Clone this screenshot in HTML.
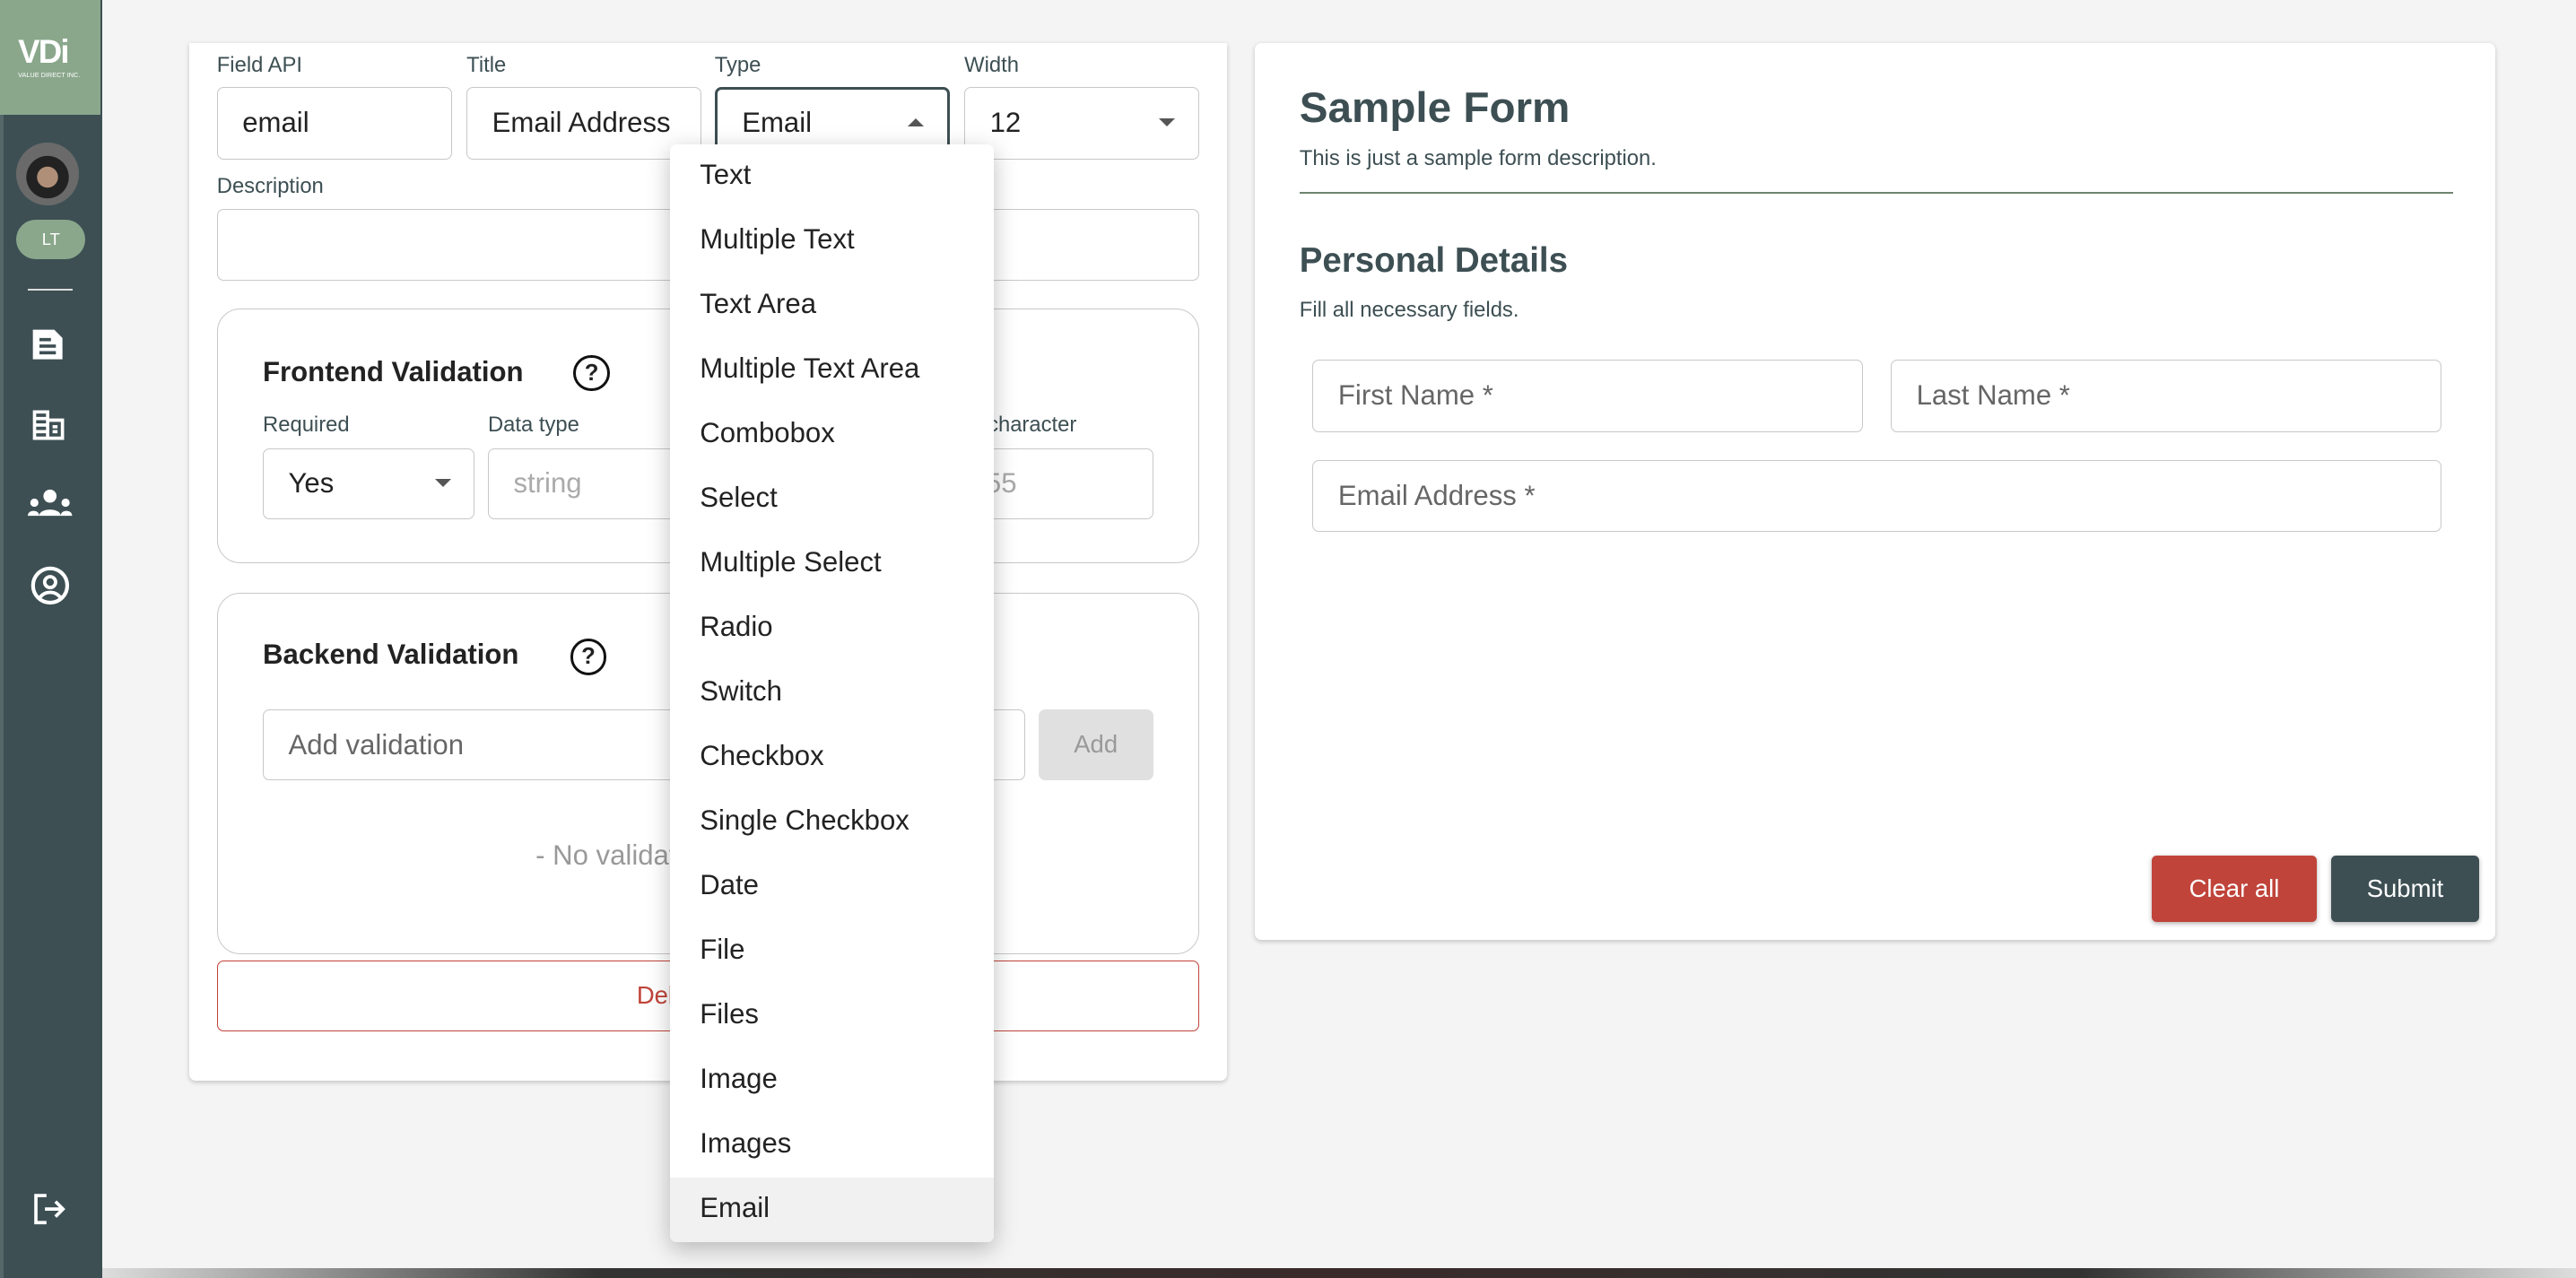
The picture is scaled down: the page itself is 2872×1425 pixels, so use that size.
<!DOCTYPE html>
<html><head><meta charset="utf-8"><style>
html,body{margin:0;padding:0;width:2872px;height:1424px;overflow:hidden;background:#f4f4f4}
#w{position:absolute;left:0;top:0;width:1568px;height:778px;zoom:1.8316;font-family:"Liberation Sans",sans-serif;color:#222}
.a{position:absolute}
.lbl{position:absolute;font-size:13px;color:#3d4f53}
.in{position:absolute;border:1px solid #c8c8c8;border-radius:4px;background:#fff;box-sizing:border-box;font-size:17px;padding-left:15px;display:flex;align-items:center}
.car{position:absolute;right:14px;top:50%;margin-top:-3px;width:0;height:0;border-left:5px solid transparent;border-right:5px solid transparent;border-top:5px solid #555}
.box{position:absolute;border:1px solid #c8c8c8;border-radius:14px;box-sizing:border-box}
.h{position:absolute;font-weight:bold;font-size:17px;color:#222}
.q{position:absolute;width:19px;height:19px;border:2px solid #111;border-radius:50%;font-size:14px;font-weight:bold;text-align:center;line-height:19px}
.dd div{height:39.3px;line-height:37px;padding-left:18px;font-size:17px;color:#222}
</style></head><body><div id="w">
<div class="a" style="left:0;top:0;width:62px;height:778px;background:#3d4f53"></div>
<div class="a" style="left:0;top:0;width:2px;height:778px;background:#56676a"></div>
<div class="a" style="left:0;top:0;width:61px;height:70px;background:#8aa78c"></div>
<div class="a" style="left:11px;top:20px;color:#fff;font-weight:bold;font-size:20px;letter-spacing:-1px">VDi</div>
<div class="a" style="left:11px;top:43px;color:#fff;font-size:4px">VALUE DIRECT INC.</div>
<div class="a" style="left:10px;top:87px;width:38px;height:38px;border-radius:50%;background:radial-gradient(circle at 50% 55%,#b08f78 0 22%,#222 23% 45%,#6a6a6a 46%)"></div>
<div class="a" style="left:10px;top:134px;width:42px;height:24px;border-radius:12px;background:#8aa78c;color:#fff;font-size:10px;text-align:center;line-height:24px">LT</div>
<div class="a" style="left:17px;top:176px;width:27px;height:1px;background:#ddd"></div>
<svg class="a" style="left:18px;top:199px" width="24" height="24" viewBox="0 0 24 24"><path fill="#fff" d="M2 2h13l5 5v13H2z"/><path stroke="#3d4f53" stroke-width="2" d="M6 8h7M6 12h10M6 16h10"/></svg>
<svg class="a" style="left:18px;top:247px" width="24" height="24" viewBox="0 0 24 24"><path fill="none" stroke="#fff" stroke-width="2" d="M3 4h8v16H3zM11 9h9v11h-9M3 8h8M3 12h8M3 16h8M14 13h3M14 16h3"/></svg>
<svg class="a" style="left:17px;top:297px" width="27" height="20" viewBox="0 0 27 20"><circle cx="13.5" cy="5" r="4" fill="#fff"/><path d="M7 17c0-5 13-5 13 0z" fill="#fff"/><circle cx="4" cy="9" r="2.5" fill="#fff"/><circle cx="23" cy="9" r="2.5" fill="#fff"/><path d="M0 17c0-4 7-4 7 0zM20 17c0-4 7-4 7 0z" fill="#fff"/></svg>
<svg class="a" style="left:18px;top:344px" width="25" height="25" viewBox="0 0 24 24"><circle cx="12" cy="12" r="10" fill="none" stroke="#fff" stroke-width="2.2"/><circle cx="12" cy="10" r="3.2" fill="none" stroke="#fff" stroke-width="2"/><path d="M6 19c3-4 9-4 12 0" fill="none" stroke="#fff" stroke-width="2"/></svg>
<svg class="a" style="left:19px;top:725px" width="22" height="22" viewBox="0 0 24 24"><path d="M10 3H3v18h7M9 12h12M16 7l5 5-5 5" fill="none" stroke="#fff" stroke-width="2.2"/></svg>
<div class="a" style="left:62px;top:772px;width:1506px;height:6px;background:linear-gradient(90deg,#ddd,#333 20%,#3a2a2a 50%,#333 80%,#ddd)"></div>
<div class="a" style="left:115px;top:26px;width:632px;height:632px;background:#fff;border-radius:0 0 4px 4px;box-shadow:0 1px 3px rgba(0,0,0,.2)"></div>
<div class="lbl" style="left:132px;top:32px">Field API</div>
<div class="lbl" style="left:284px;top:32px">Title</div>
<div class="lbl" style="left:435px;top:32px">Type</div>
<div class="lbl" style="left:587px;top:32px">Width</div>
<div class="in" style="left:132px;top:53px;width:143px;height:44px">email</div>
<div class="in" style="left:284px;top:53px;width:143px;height:44px;overflow:hidden;white-space:nowrap">Email Address</div>
<div class="in" style="left:435px;top:53px;width:143px;height:44px;border:2px solid #3d4f53">Email<div class="car" style="border-top:0;border-bottom:5px solid #555"></div></div>
<div class="in" style="left:587px;top:53px;width:143px;height:44px">12<div class="car"></div></div>
<div class="lbl" style="left:132px;top:106px">Description</div>
<div class="in" style="left:132px;top:127px;width:598px;height:44px"></div>
<div class="box" style="left:132px;top:188px;width:598px;height:155px"></div>
<div class="h" style="left:160px;top:217px">Frontend Validation</div>
<div class="q" style="left:349px;top:216px">?</div>
<div class="lbl" style="left:160px;top:251px">Required</div>
<div class="lbl" style="left:297px;top:251px">Data type</div>
<div class="lbl" style="left:573px;top:251px">Max character</div>
<div class="in" style="left:160px;top:273px;width:129px;height:43px">Yes<div class="car"></div></div>
<div class="in" style="left:297px;top:273px;width:250px;height:43px;color:#aaa">string</div>
<div class="in" style="left:556px;top:273px;width:146px;height:43px;color:#aaa;padding-left:34px">255</div>
<div class="box" style="left:132px;top:361px;width:598px;height:220px"></div>
<div class="h" style="left:160px;top:389px">Backend Validation</div>
<div class="q" style="left:347px;top:389px">?</div>
<div class="in" style="left:160px;top:432px;width:464px;height:43px;color:#666">Add validation</div>
<div class="a" style="left:632px;top:432px;width:70px;height:43px;background:#e0e0e0;border-radius:4px;color:#999;font-size:15px;text-align:center;line-height:43px">Add</div>
<div class="a" style="left:326px;top:511px;color:#999;font-size:17px;white-space:nowrap">- No validation added -</div>
<div class="a" style="left:132px;top:585px;width:598px;height:43px;box-sizing:border-box;border:1px solid #c0443a;border-radius:4px;color:#c0443a;line-height:41px;font-size:15px;padding-left:255px">Delete Field</div>
<div class="a dd" style="left:408px;top:88px;width:197px;height:668px;background:#fff;border-radius:4px;box-shadow:0 4px 14px rgba(0,0,0,.25);overflow:hidden">
<div>Text</div><div>Multiple Text</div><div>Text Area</div><div>Multiple Text Area</div><div>Combobox</div><div>Select</div><div>Multiple Select</div><div>Radio</div><div>Switch</div><div>Checkbox</div><div>Single Checkbox</div><div>Date</div><div>File</div><div>Files</div><div>Image</div><div>Images</div><div style="background:#f0f1f0">Email</div>
</div>
<div class="a" style="left:764px;top:26px;width:755px;height:546px;background:#fff;border-radius:4px;box-shadow:0 1px 3px rgba(0,0,0,.2)"></div>
<div class="a" style="left:791px;top:51px;font-size:26px;font-weight:bold;color:#3d4f53">Sample Form</div>
<div class="a" style="left:791px;top:89px;font-size:13px;color:#3d4f53">This is just a sample form description.</div>
<div class="a" style="left:791px;top:117px;width:702px;height:1px;background:#6e8470"></div>
<div class="a" style="left:791px;top:147px;font-size:21px;font-weight:bold;color:#3d4f53">Personal Details</div>
<div class="a" style="left:791px;top:181px;font-size:13px;color:#3d4f53">Fill all necessary fields.</div>
<div class="in" style="left:799px;top:219px;width:335px;height:44px;color:#666">First Name *</div>
<div class="in" style="left:1151px;top:219px;width:335px;height:44px;color:#666">Last Name *</div>
<div class="in" style="left:799px;top:280px;width:687px;height:44px;color:#666">Email Address *</div>
<div class="a" style="left:1310px;top:521px;width:100px;height:40px;background:#c0443a;border-radius:3px;color:#fff;font-size:15px;text-align:center;line-height:40px;box-shadow:0 1px 3px rgba(0,0,0,.3)">Clear all</div>
<div class="a" style="left:1419px;top:521px;width:90px;height:40px;background:#3d4f53;border-radius:3px;color:#fff;font-size:15px;text-align:center;line-height:40px;box-shadow:0 1px 3px rgba(0,0,0,.3)">Submit</div>
</div></body></html>
